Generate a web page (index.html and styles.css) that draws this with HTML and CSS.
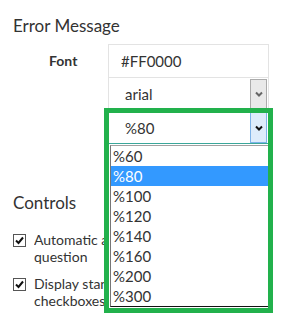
FILE: index.html
```html
<!doctype html>
<html lang="en">
<head>
    <meta charset="UTF-8">
    <title>Settings</title>
    <link rel="stylesheet" href="styles.css">
</head>
<body>
<div class="page">
    <div class="group">
        <h2>Error Message</h2>
        <div class="field">
            <label class="field-label">Font</label>
            <div class="field-controls">
                <div class="input">#FF0000</div>
                <div class="select">
                    <span class="select-value">arial</span>
                    <span class="select-btn">
                        <svg width="8" height="6" viewBox="0 0 8 6"><path d="M1 1.5 L4 4.5 L7 1.5" fill="none" stroke="#666" stroke-width="2"/></svg>
                    </span>
                </div>
                <div class="select open">
                    <span class="select-value">%80</span>
                    <span class="select-btn">
                        <svg width="8" height="6" viewBox="0 0 8 6"><path d="M1 1.5 L4 4.5 L7 1.5" fill="none" stroke="#111" stroke-width="2"/></svg>
                    </span>
                    <ul class="dropdown">
                        <li>%60</li>
                        <li class="active">%80</li>
                        <li>%100</li>
                        <li>%120</li>
                        <li>%140</li>
                        <li>%160</li>
                        <li>%200</li>
                        <li>%300</li>
                    </ul>
                </div>
            </div>
        </div>
    </div>

    <div class="group controls">
        <h2>Controls</h2>
        <label class="check">
            <span class="check-box">
                <svg width="11" height="11" viewBox="0 0 11 11"><path d="M2 5.5 L4.5 8 L9 2.5" fill="none" stroke="#111" stroke-width="2"/></svg>
            </span>
            <span class="check-text">Automatic advance to the next<br>question</span>
        </label>
        <label class="check">
            <span class="check-box">
                <svg width="11" height="11" viewBox="0 0 11 11"><path d="M2 5.5 L4.5 8 L9 2.5" fill="none" stroke="#111" stroke-width="2"/></svg>
            </span>
            <span class="check-text">Display standard radio buttons and<br>checkboxes</span>
        </label>
    </div>

    <div class="highlight"></div>
</div>
</body>
</html>
```

FILE: styles.css
```css
* {
    padding: 0;
    margin: 0;
    box-sizing: border-box;
}

body {
    font-family: Lato, "Open Sans", sans-serif;
    color: #333;
    background: #fff;
}

.page {
    position: relative;
    width: 283px;
    height: 313px;
    overflow: hidden;
    padding-left: 13px;
}

h2 {
    font-size: 17px;
    font-weight: normal;
    line-height: 25px;
    color: #333;
}

.group h2 {
    margin-top: 13px;
    margin-bottom: 6px;
}

.field {
    display: flex;
}

.field-label {
    width: 95px;
    height: 34px;
    line-height: 34px;
    padding-left: 36px;
    font-size: 14px;
    font-weight: bold;
}

.field-controls {
    width: 161px;
    display: flex;
    flex-direction: column;
}

.input {
    height: 34px;
    line-height: 32px;
    padding-left: 12px;
    font-size: 15px;
    border: 1px solid #e3e3e3;
}

.select {
    position: relative;
    height: 32px;
    display: flex;
    align-items: center;
    font-size: 15px;
    border-left: 1px solid #e3e3e3;
    border-right: 1px solid #e3e3e3;
}

.select-value {
    flex: 1;
    padding-left: 16px;
}

.select-btn {
    width: 17px;
    height: 30px;
    margin-right: 1px;
    display: flex;
    align-items: center;
    justify-content: center;
    background: #e9e9e9;
    border: 1px solid #ababab;
}

.select.open {
    margin-top: 2px;
    border-bottom: 1px solid #3aa79a;
}

.select.open .select-btn {
    height: 31px;
    background: #deecfb;
    border-color: #7db2e8;
}

.dropdown {
    position: absolute;
    top: 33px;
    left: 1px;
    right: 0;
    list-style: none;
    background: #fff;
    border-top: 1px solid #a0a0a0;
    border-left: 1px solid #767676;
    border-bottom: 1px solid #111;
}

.dropdown li {
    height: 20px;
    line-height: 20px;
    padding-left: 2px;
    font-size: 15px;
}

.dropdown li.active {
    background: #3399ff;
    color: #fff;
}

.controls h2 {
    margin-top: 46px;
    margin-bottom: 16px;
}

.check {
    display: flex;
    margin-bottom: 10px;
    font-size: 14px;
    line-height: 17px;
}

.check-box {
    width: 13px;
    height: 13px;
    margin-top: 3px;
    margin-right: 8px;
    border: 1px solid #555;
    display: flex;
    align-items: center;
    justify-content: center;
    flex-shrink: 0;
}

/* the rest of the label sits under the open dropdown */
.check-text {
    width: 70px;
    white-space: nowrap;
    overflow: hidden;
}

.highlight {
    position: absolute;
    left: 104px;
    top: 108px;
    width: 169px;
    height: 205px;
    border: 5px solid #22b14c;
}
```
